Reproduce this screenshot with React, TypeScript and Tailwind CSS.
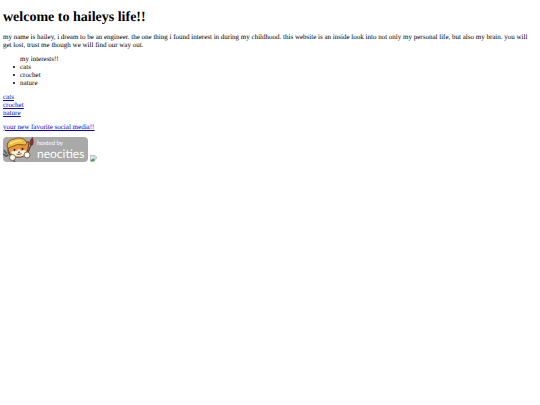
const interests = ["cats", "crochet", "nature"];

function NeocitiesCat() {
  return (
    <svg viewBox="0 0 34 26" className="h-[26px] w-[34px] shrink-0" aria-hidden="true">
      <path d="M5 6 L5 13 Q6 18 11 20 L18 20 Q24 18 25 12 L26 5 L21 5 Q14 1 8 5Z" fill="#ec9238" stroke="#4b3420" strokeWidth="0.9" />
      <path d="M8 15 Q11 12 14 14 Q16 10 18 14 Q21 12 23 14 Q22 19 17 19.5 Q10 20 8 15Z" fill="#fff4df" />
      <path d="M4 10 Q4 3 11 2 Q18 -1 23 4 Q25 7 22 8 Q14 6 8 10 Q5 12 4 10Z" fill="#efbd42" stroke="#6b4a1d" strokeWidth="0.8" />
      <path d="M7 7 Q12 3 19 4" fill="none" stroke="#ffe38a" strokeWidth="1.2" />
      <ellipse cx="11.5" cy="13" rx="0.9" ry="1.3" fill="#2d211b" />
      <ellipse cx="19.5" cy="12" rx="0.9" ry="1.3" fill="#2d211b" />
      <path d="M15 15 L17 14.8 L16 16Z M13.5 17 Q16 18.5 19 16.5" fill="#a34b36" stroke="#694131" strokeWidth="0.6" />
      <path d="M1 13 L3 16 L6 18 M5 13 L6 18 L12 25 M0 17 L3 19 L6 18" fill="none" stroke="#5c5c5c" strokeWidth="1.6" />
      <path d="M4 16 L10 24" stroke="#c8c8c8" strokeWidth="0.6" />
      <circle cx="9.5" cy="20.5" r="3" fill="#fff8e9" stroke="#66513d" strokeWidth="0.8" />
      <path d="M23 20 L28 8" stroke="#6c402e" strokeWidth="1.3" />
      <path d="M27 8 Q26 4 29.5 0.5 Q31 5 29.5 8Z" fill="#9c302b" stroke="#502722" strokeWidth="0.6" />
      <circle cx="24" cy="18" r="3" fill="#fff8e9" stroke="#66513d" strokeWidth="0.8" />
    </svg>
  );
}

function BrokenImage() {
  return (
    <svg viewBox="0 0 16 16" className="size-[7px]" role="img" aria-label="Missing picture">
      <path d="M1 1H11L15 5V15H1Z" fill="#c4d8f5" stroke="#a6a9ad" strokeWidth="1.5" />
      <path d="M11 1V5H15" fill="#fff" stroke="#a6a9ad" />
      <circle cx="5" cy="6" r="2" fill="#fff" />
      <path d="M2 14V12L7 8L11 10V14Z" fill="#43a047" />
      <path d="M8 16L16 8V16Z" fill="#fff" />
    </svg>
  );
}

export default function App() {
  return (
    <main className="px-[3px] pt-2.5 font-['Liberation_Serif',serif] text-[7px] leading-[8px] text-black [text-rendering:geometricPrecision]">
      <h1 className="text-[14px] leading-[16px] font-bold">welcome to haileys life!!</h1>
      <p className="mt-[7px]">
        my name is hailey, i dream to be an engineer. the one thing i found interest in during my childhood. this
        website is an inside look into not only my personal life, but also my brain. you will get lost, trust me though
        we will find our way out.
      </p>
      <section className="mt-1.5 pl-[10px]">
        <p className="pl-[7px]">my interests!!</p>
        <ul>
          {interests.map((name) => (
            <li
              key={name}
              className="flex items-center gap-[5px] before:size-[2px] before:rounded-full before:bg-black before:content-['']"
            >
              {name}
            </li>
          ))}
        </ul>
      </section>
      <nav className="mt-1.5 flex flex-col items-start text-[#0000ee] underline">
        {interests.map((name) => (
          <a key={name} href={`#${name}`}>{name}</a>
        ))}
        <a href="#social" className="mt-1.5">your new favorite social media!!</a>
      </nav>
      <div className="mt-1.5 flex items-end gap-0.5">
        <a
          href="#neocities"
          className="flex h-[25px] w-[85px] items-center rounded-[4px] bg-[#a9a9a9] font-['Lato',sans-serif] text-white"
        >
          <NeocitiesCat />
          <span className="flex flex-col">
            <span className="text-[6px] leading-[7px]">hosted by</span>
            <span className="text-[12px] leading-[13px]">neocities</span>
          </span>
        </a>
        <BrokenImage />
      </div>
    </main>
  );
}
